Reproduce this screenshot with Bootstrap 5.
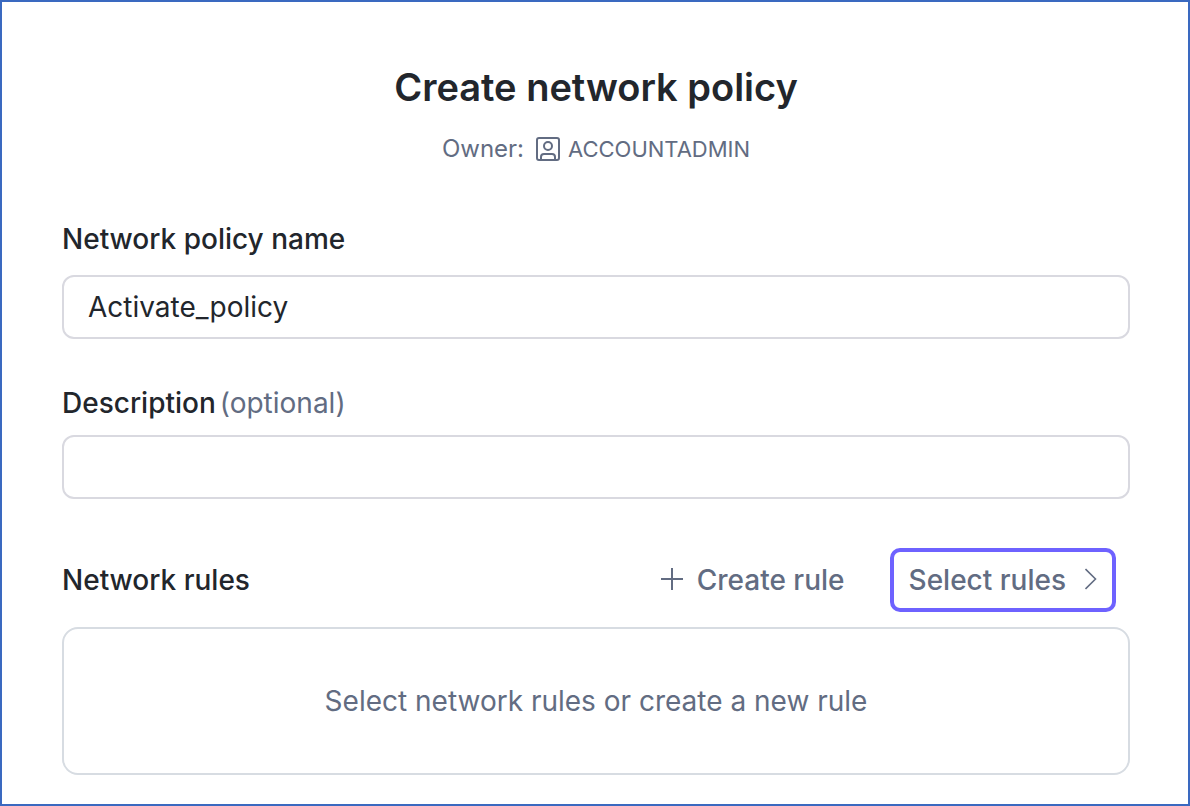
<!DOCTYPE html>
<html lang="en">
<head>
<meta charset="utf-8">
<meta name="viewport" content="width=device-width, initial-scale=1">
<title>Create network policy</title>
<link href="https://cdn.jsdelivr.net/npm/bootstrap@5.3.0/dist/css/bootstrap.min.css" rel="stylesheet">
<style>
  body { font-family: Inter, "Liberation Sans", sans-serif; font-size: 28px; line-height: 36px; color: #22262c; background: #fff; }
  .policy-dialog { border: 2px solid #3a69c0; padding: 60px 58px 29px 60px; min-height: 100vh; }
  .policy-title { font-size: 38px; line-height: 50px; font-weight: 600; }
  .muted-text { color: #626c82; }
  .owner-line { font-size: 24px; line-height: 38px; margin-top: 18px; margin-bottom: 53px; }
  .owner-role { font-size: 22px; }
  .owner-icon { margin-left: 12px; margin-right: 8px; }
  .field-label { font-size: 28px; font-weight: 500; line-height: 36px; }
  .name-field { margin-bottom: 46px; }
  .name-field .field-label { margin-bottom: 18px; }
  .desc-field .field-label { margin-bottom: 14px; }
  .policy-input, .policy-input:focus { height: 64px; border: 2px solid #d9d9e0; border-radius: 12px; padding: 0 24px; font-size: 28px; color: #22262c; }
  .rules-bar { margin: 49px 14px 15px 0; gap: 26px; }
  .rule-btn { height: 64px; border: 4px solid transparent; border-radius: 10px; padding: 0 15px; font-size: 28px; line-height: 36px; font-weight: 500; color: #626c82; }
  .btn.rule-btn.selected { border-color: #6e62ff; }
  .plus-gap { gap: 14px; }
  .chevron-gap { gap: 19px; }
  .rules-empty { min-height: 148px; border: 2px solid #d7dce2; border-radius: 16px; }
</style>
</head>
<body>
<main class="policy-dialog">
  <header class="text-center">
    <h1 class="policy-title m-0">Create network policy</h1>
    <div class="owner-line muted-text d-flex justify-content-center align-items-center">
      <span>Owner:</span>
      <svg class="owner-icon" width="24" height="24" viewBox="0 0 24 24" fill="none" stroke="currentColor" stroke-width="2" aria-hidden="true"><rect x="1" y="1" width="22" height="22" rx="2"/><circle cx="12" cy="9" r="4"/><path d="M5 23v-3q0-3 3-3h8q3 0 3 3v3"/></svg>
      <span class="owner-role">ACCOUNTADMIN</span>
    </div>
  </header>
  <form>
    <div class="name-field">
      <label class="field-label d-block" for="policy-name">Network policy name</label>
      <input class="form-control policy-input" id="policy-name" type="text" value="Activate_policy">
    </div>
    <div class="desc-field">
      <label class="field-label d-flex gap-1" for="policy-desc"><span>Description</span><span class="muted-text fw-normal">(optional)</span></label>
      <input class="form-control policy-input" id="policy-desc" type="text">
    </div>
    <div class="rules-bar d-flex align-items-center">
      <h2 class="field-label m-0 me-auto">Network rules</h2>
      <button type="button" class="btn rule-btn plus-gap d-flex align-items-center">
        <svg width="22" height="24" viewBox="0 0 22 24" fill="none" stroke="currentColor" stroke-width="2" aria-hidden="true"><path d="M11 0v22M0 11h22"/></svg>
        Create rule
      </button>
      <button type="button" class="btn rule-btn selected chevron-gap d-flex align-items-center">
        Select rules
        <svg width="12" height="24" viewBox="0 0 12 24" fill="none" stroke="currentColor" stroke-width="1.6" aria-hidden="true"><path d="M.5 1l10 10-10 10"/></svg>
      </button>
    </div>
    <div class="rules-empty muted-text d-flex align-items-center justify-content-center">Select network rules or create a new rule</div>
  </form>
</main>
<script src="https://cdn.jsdelivr.net/npm/bootstrap@5.3.0/dist/js/bootstrap.bundle.min.js"></script>
</body>
</html>
